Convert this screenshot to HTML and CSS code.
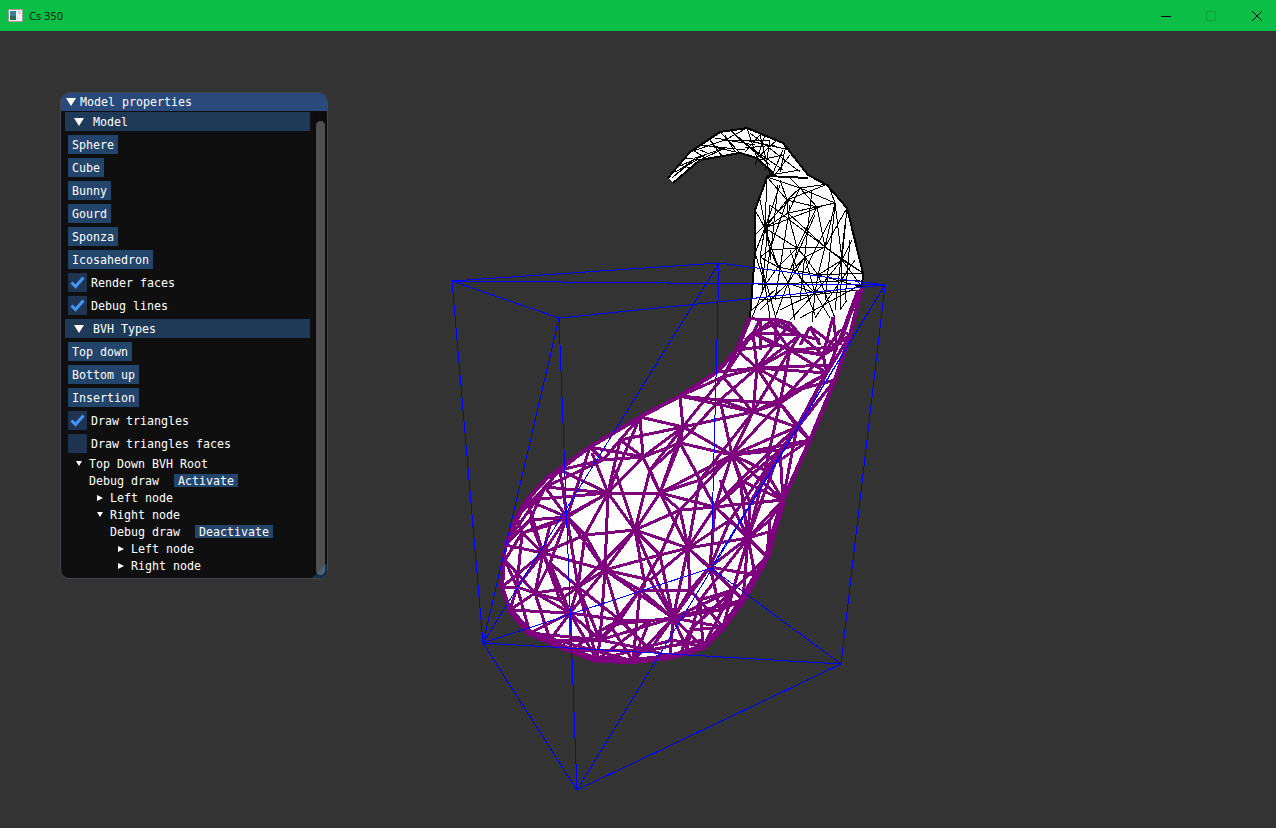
FILE: index.html
```html
<!DOCTYPE html>
<html lang="en">
<head>
    <meta charset="UTF-8">
    <title>Cs 350</title>
    <link rel="stylesheet" href="styles.css">
</head>
<body>
    <div class="title-bar">
        <svg class="app-icon" viewBox="0 0 15 13" xmlns="http://www.w3.org/2000/svg">
            <rect x="0.5" y="0.5" width="14" height="12" fill="#f4f4f4" stroke="#9a9a9a" />
            <rect x="2" y="2" width="6" height="9" fill="#3f7f96" />
            <rect x="2" y="7" width="6" height="4" fill="#2c6a55" />
            <rect x="10" y="2" width="3" height="3" fill="#c8d0d8" />
        </svg>
        <span class="app-name">Cs 350</span>
        <div class="win-controls">
            <svg class="win-btn" viewBox="0 0 10 10" xmlns="http://www.w3.org/2000/svg"><path d="M0 5.5H10" stroke="#000" /></svg>
            <svg class="win-btn" viewBox="0 0 10 10" xmlns="http://www.w3.org/2000/svg"><rect x="0.5" y="0.5" width="9" height="9" fill="none" stroke="#0a9c3b" /></svg>
            <svg class="win-btn" viewBox="0 0 10 10" xmlns="http://www.w3.org/2000/svg"><path d="M0 0L10 10M10 0L0 10" stroke="#000" /></svg>
        </div>
    </div>

    <div class="viewport">
        <svg class="scene" viewBox="0 31 1276 797" xmlns="http://www.w3.org/2000/svg">
            <!-- gourd silhouette -->
            <polygon fill="#fff" points="668,178 690,152 720,132 747,128 783,143 808,175 827,185 847,208 863,273 862,287 850,335 835,380 810,440 783,500 767,557 743,600 723,627 703,647 670,657 633,661 597,660 570,650 530,633 510,610 502,587 505,545 517,517 527,500 547,478 590,447 640,417 680,396 717,372 737,350 750,318 755,253 755,210 767,177 773,173 757,158 740,153 700,160 673,183" />

            <!-- black wire, top of the mesh -->
            <g fill="none" stroke="#000">
                <path stroke-width="2" d="M668,178L690,152L720,132L747,128L783,143L808,175L827,185L847,208L863,273L862,287M673,183L700,160L740,153L757,158L773,173L767,177L755,210L755,253L750,318M767,176L808,178" />
                <path d="M787,200L767,177M787,200L800,188M787,200L765,228M787,200L788,213M787,200L770,250M787,200L817,207M787,200L828,184M787,200L780,180
                    M800,188L767,177M800,188L828,184M800,188L817,207M800,188L788,213M800,188L835,203M800,188L790,178
                    M765,228L755,210M765,228L767,177M765,228L788,213M765,228L770,250M765,228L760,257M765,228L755,253M765,228L778,267M765,228L797,248
                    M825,247L817,207M825,247L835,203M825,247L847,208M825,247L805,257M825,247L818,275M825,247L842,260M825,247L797,248M825,247L788,213M825,247L863,273
                    M797,248L788,213M797,248L817,207M797,248L770,250M797,248L805,257M797,248L793,270M797,248L778,267
                    M805,257L793,270M805,257L818,275M805,257L815,293M805,257L788,283
                    M842,260L847,208M842,260L835,203M842,260L863,273M842,260L862,287M842,260L818,275M842,260L840,310
                    M770,250L760,257M770,250L778,267M770,250L765,285M770,250L788,283
                    M793,270L778,267M793,270L788,283M793,270L815,293M793,270L818,275
                    M765,285L760,257M765,285L755,253M765,285L752,318M765,285L770,318M765,285L778,267M765,285L788,283
                    M815,293L818,275M815,293L788,283M815,293L862,287M815,293L790,320M815,293L830,318M815,293L842,260M815,293L780,310M815,293L812,322
                    M788,283L775,318M788,283L795,320M788,283L760,310M818,275L862,287M818,275L863,273M818,275L835,318
                    M835,203L828,184M835,203L817,207M817,207L788,213M760,257L778,267M852,240L842,260M847,300L840,310
                    M770,205L762,290M778,185L770,260M790,205L775,300M812,190L800,300M835,205L825,300M845,225L835,310M850,240L845,300
                    M760,260L775,315M790,250L815,315M815,215L790,270M830,220L805,270M770,205L825,247M765,228L825,205
                    M758,285L860,280M760,300L860,290M780,185L765,228M755,235L790,200M760,200L770,250M855,260L815,318M860,285L800,318M752,310L775,290
                    M680,172L695,158M695,158L725,148M725,148L700,160M690,152L725,140M725,140L747,128M720,132L740,153M730,130L765,160
                    M747,128L757,158M745,140L790,150M760,135L770,175M777,140L757,158M783,150L773,173M790,155L775,175M800,170L770,175
                    M710,140L722,156M693,150L705,158M680,165L690,168M725,140L770,140M705,145L740,153M682,165L712,152M760,135L745,152
                    M740,140L783,170M750,133L800,172M765,135L755,165M770,140L765,170M785,150L780,172M735,135L770,165M700,145L745,150M715,138L755,145M725,135L735,152
                    M700,150L712,155M685,158L700,160M672,178L690,162M675,172L697,160M775,145L745,148M783,155L760,160" />
            </g>

            <!-- purple wire, selected triangles -->
            <g fill="none" stroke="#7f007f" stroke-width="3">
                <path stroke-width="4" d="M750,318L737,350L717,372L680,396L640,417L590,447L547,478L527,500L517,517L505,545L502,587L510,610" />
                <path stroke-width="6" d="M510,610L530,633L570,650L597,660L633,661L670,657L703,647L723,627L743,600L767,557L783,500" />
                <path stroke-width="4" d="M783,500L810,440L835,380L850,335L862,287" />
                <path d="M608,493L592,453M608,493L545,487M608,493L567,517M608,493L605,570M608,493L635,530M608,493L660,493M608,493L643,457M608,493L640,417M608,493L527,500M608,493L560,470M608,493L585,535
                    M635,530L660,493M635,530L688,548M635,530L605,570M635,530L673,618M635,530L645,585M635,530L660,555M635,530L585,535M635,530L615,470M635,530L680,510M635,530L578,587
                    M567,517L545,487M567,517L527,500M567,517L522,533M567,517L543,553M567,517L605,570M567,517L590,447M567,517L578,587M567,517L550,563
                    M543,553L522,533M543,553L517,587M543,553L505,545M543,553L535,593M543,553L570,613M543,553L605,570M543,553L502,587M543,553L560,600
                    M605,570L578,587M605,570L570,613M605,570L640,590M605,570L620,620M605,570L673,618M605,570L600,640
                    M517,587L502,587M517,587L510,610M517,587L530,633M517,587L535,593M517,587L522,533
                    M570,613L535,593M570,613L530,633M570,613L570,650M570,613L597,660M570,613L578,587M570,613L620,620
                    M535,593L510,610M535,593L550,640M535,593L578,587M535,593L505,560
                    M673,618L633,661M673,618L670,657M673,618L650,650M673,618L703,647M673,618L723,627M673,618L733,590M673,618L710,567M673,618L688,548M673,618L640,590M673,618L610,625M673,618L600,640M673,618L690,590M673,618L743,600
                    M688,548L660,493M688,548L710,567M688,548L715,507M688,548L660,555M688,548L733,590M688,548L748,538M688,548L650,580
                    M748,538L715,507M748,538L750,503M748,538L783,500M748,538L767,557M748,538L743,600M748,538L733,590M748,538L710,567M748,538L720,480M748,538L770,520
                    M710,567L733,590M710,567L715,507M710,567L690,590M710,567L743,600
                    M660,493L643,457M660,493L680,443M660,493L715,507M660,493L683,427M660,493L732,455
                    M715,507L732,455M715,507L750,503M715,507L680,443M715,507L780,450
                    M750,503L732,455M750,503L783,500M750,503L780,450M750,503L797,427
                    M732,455L683,427M732,455L753,412M732,455L780,403M732,455L797,427M732,455L780,450M732,455L810,440M732,455L680,443M732,455L700,480
                    M753,412L683,427M753,412L723,377M753,412L757,368M753,412L780,403M753,412L797,427M753,412L680,396M753,412L790,350
                    M683,427L643,457M683,427L680,396M683,427L640,417M683,427L723,377M683,427L680,443M683,427L620,440
                    M780,403L757,368M780,403L790,350M780,403L823,355M780,403L827,373M780,403L797,427M780,403L810,440M780,403L720,400
                    M757,368L753,333M757,368L723,377M757,368L790,350M757,368L800,335M757,368L717,372M757,368L737,350M757,368L827,373M757,368L830,365
                    M790,350L753,333M790,350L800,335M790,350L823,355M790,350L837,347M790,350L770,322
                    M823,355L800,335M823,355L837,347M823,355L827,373M823,355L850,335
                    M753,333L745,340M753,333L760,320M753,333L780,322M753,333L800,335M753,333L737,350
                    M800,335L780,322M800,335L820,340M723,377L680,396M723,377L737,350M723,377L753,333
                    M680,443L643,457M643,457L590,447M643,457L640,417M643,457L603,460M603,460L590,447M603,460L545,487M603,460L560,470
                    M750,318L760,320L775,319L790,323L800,335M833,317L823,355M833,317L837,347M810,327L800,345M810,327L820,345
                    M835,350L862,287M840,345L855,300M827,373L858,290M827,373L850,335M797,427L827,373M797,427L835,380M797,427L810,440M783,500L797,427
                    M530,633L633,661M550,640L600,640L650,650L670,657M570,650L650,650M597,660L673,640M703,647L733,590M723,627L733,590M743,600L733,590
                    M530,633L600,640M510,610L570,613M505,545L527,500M505,545L545,487M517,517L545,487M517,517L522,533M505,560L522,533M505,560L517,587
                    M620,620L640,590M620,620L600,640M620,620L650,650M640,590L645,585M578,587L620,620M578,587L597,660M640,590L600,640
                    M715,507L783,500M732,455L783,500M780,450L810,440M780,450L783,500M780,450L748,538M780,450L835,380M797,427L750,503
                    M748,538L775,530M770,520L783,500M770,520L767,557M767,557L733,590M755,575L710,567M755,575L748,538M755,575L723,627
                    M720,610L733,590M720,610L673,618M720,610L743,600M720,610L710,567M700,600L748,538M700,600L703,647M700,600L733,590M690,630L723,627M690,630L733,590M690,590L723,627
                    M730,520L715,507M730,520L748,538M730,520L710,567M730,520L688,548M730,520L767,557M730,520L780,450
                    M740,480L715,507M740,480L783,500M740,480L732,455M740,480L797,427M740,480L748,538M765,470L783,500M765,470L732,455M765,470L810,440M765,470L748,538M765,470L780,403
                    M660,493L700,480M700,480L715,507M700,480L688,548M700,480L680,443M700,480L753,412M680,510L715,507M680,510L660,555M680,510L688,548M680,510L660,493M680,510L732,455
                    M650,470L660,493M650,470L680,443M650,470L635,530M650,470L683,427M620,440L640,417M620,440L603,460M620,440L608,493M620,440L643,457
                    M660,555L640,590M660,555L673,618M660,555L605,570M650,580L673,618M650,580L605,570M690,590L640,590M690,590L688,548
                    M640,590L633,661M610,625L633,661M610,625L570,650M650,620L620,620M650,620L633,661M650,620L597,660
                    M790,350L827,373M757,368L797,390M797,390L827,373M797,390L753,412M797,390L780,403M797,390L835,380M720,400L753,412M720,400L680,443M720,400L680,396M720,400L732,455M720,400L757,368
                    M830,365L837,347M830,365L797,427M770,322L737,350M770,322L800,335M770,322L745,340M760,320L760,350M775,345L775,320M775,345L737,350M775,345L753,333M775,345L823,355M840,330L823,355M840,330L850,335M810,327L837,347M790,323L757,368
                    M560,470L545,487M560,470L567,517M560,470L590,447M527,500L543,553M530,520L505,545M530,520L567,517M530,520L545,487M530,520L543,553M550,525L608,493M550,525L567,517M550,525L543,553M550,525L522,533
                    M585,535L543,553M585,535L567,517M585,535L605,570M585,535L578,587M560,600L578,587M560,600L570,613M560,600L535,593M550,563L578,587M550,563L535,593M550,563L570,613
                    M550,640L570,613M550,640L570,650M578,587L600,640M600,640L597,660M600,640L570,613
                    M673,640L703,647M673,618L690,655M690,630L680,655M700,600L685,655M650,650L703,640" />
            </g>

            <!-- blue wire, BVH volume -->
            <path fill="none" stroke="#00f" d="M452,281L719,263L885,285L452,281L559,318L885,285M452,281L483,643L841,664L577,790L483,643L559,318L577,790
                M719,263L483,643M719,263L711,568L483,643M711,568L841,664M711,568L885,285M577,790L885,285M841,664L885,285" />
        </svg>

        <div class="panel">
            <div class="panel-title"><span class="arrow-big"></span>Model properties</div>
            <div class="panel-body">
                <div class="content">
                    <div class="section"><span class="arrow-big"></span>Model</div>
                    <button class="btn">Sphere</button>
                    <button class="btn">Cube</button>
                    <button class="btn">Bunny</button>
                    <button class="btn">Gourd</button>
                    <button class="btn">Sponza</button>
                    <button class="btn">Icosahedron</button>
                    <div class="check-row">
                        <span class="check"><svg viewBox="0 0 19 19" xmlns="http://www.w3.org/2000/svg"><path d="M3.5 9.5L7.5 13.5L15.5 4.5" /></svg></span>Render faces
                    </div>
                    <div class="check-row">
                        <span class="check"><svg viewBox="0 0 19 19" xmlns="http://www.w3.org/2000/svg"><path d="M3.5 9.5L7.5 13.5L15.5 4.5" /></svg></span>Debug lines
                    </div>
                    <div class="section"><span class="arrow-big"></span>BVH Types</div>
                    <button class="btn">Top down</button>
                    <button class="btn">Bottom up</button>
                    <button class="btn">Insertion</button>
                    <div class="check-row">
                        <span class="check"><svg viewBox="0 0 19 19" xmlns="http://www.w3.org/2000/svg"><path d="M3.5 9.5L7.5 13.5L15.5 4.5" /></svg></span>Draw triangles
                    </div>
                    <div class="check-row">
                        <span class="check"></span>Draw triangles faces
                    </div>

                    <div class="tree">
                        <div class="node"><span class="arrow-down"></span>Top Down BVH Root</div>
                        <div class="children">
                            <div class="leaf">Debug draw<button class="btn btn-small">Activate</button></div>
                            <div class="node"><span class="arrow-right"></span>Left node</div>
                            <div class="node"><span class="arrow-down"></span>Right node</div>
                            <div class="children">
                                <div class="leaf">Debug draw<button class="btn btn-small">Deactivate</button></div>
                                <div class="node"><span class="arrow-right"></span>Left node</div>
                                <div class="node"><span class="arrow-right"></span>Right node</div>
                            </div>
                        </div>
                    </div>
                </div>
                <div class="scrollbar"><div class="grab"></div></div>
            </div>
            <div class="grip"></div>
        </div>
    </div>
</body>
</html>
```

FILE: styles.css
```css
html, body {
    height: 100%;
}

body {
    margin: 0;
    overflow: hidden;
    display: flex;
    flex-direction: column;
    background-color: #333333;
}

/* Window title bar */
.title-bar {
    height: 31px;
    flex: none;
    display: flex;
    align-items: center;
    padding-left: 8px;
    background-color: #0bbf46;
    font-family: "Noto Sans", sans-serif;
    font-size: 11px;
    color: #06281a;
}

.app-icon {
    width: 15px;
    height: 13px;
    margin-right: 6px;
}

.win-controls {
    margin-left: auto;
    display: flex;
    gap: 35px;
    padding-right: 14px;
}

.win-btn {
    width: 10px;
    height: 10px;
    shape-rendering: crispEdges;
}

.win-btn:last-child {
    margin-left: 1px;
}

/* 3D viewport */
.viewport {
    position: relative;
    flex: 1;
}

.scene {
    position: absolute;
    top: 0;
    left: 0;
    width: 1276px;
    height: 797px;
    shape-rendering: crispEdges;
}

/* Floating debug window */
.panel {
    position: absolute;
    left: 60px;
    top: 61px;
    width: 268px;
    height: 487px;
    box-sizing: border-box;
    display: flex;
    flex-direction: column;
    overflow: hidden;
    background-color: #0f0f0f;
    border: 1px solid #44454d;
    border-radius: 9px;
    font-family: "DejaVu Sans Mono", monospace;
    font-size: 11.63px;
    color: #fff;
}

.panel-title {
    height: 18px;
    flex: none;
    display: flex;
    align-items: center;
    padding-left: 5px;
    background-color: #294a7a;
}

.panel-title .arrow-big {
    margin-right: 4px;
}

.panel-body {
    flex: 1;
    display: flex;
    min-height: 0;
}

.content {
    width: 252px;
    box-sizing: border-box;
    padding: 1px 3px 0 4px;
    display: flex;
    flex-direction: column;
    align-items: flex-start;
    gap: 4px;
}

.section {
    width: 100%;
    height: 19px;
    flex: none;
    display: flex;
    align-items: center;
    padding-left: 9px;
    box-sizing: border-box;
    background-color: #1f3a59;
}

.section .arrow-big {
    margin-right: 9px;
}

.btn {
    height: 19px;
    flex: none;
    margin: 0 0 0 3px;
    padding: 0 4px;
    border: none;
    background-color: #23446b;
    color: #fff;
    font: inherit;
}

.check-row {
    height: 19px;
    flex: none;
    display: flex;
    align-items: center;
    margin-left: 3px;
}

.check {
    width: 19px;
    height: 19px;
    margin-right: 4px;
    background-color: #1f3450;
}

.check svg {
    display: block;
    width: 19px;
    height: 19px;
}

.check path {
    fill: none;
    stroke: #4296fa;
    stroke-width: 3;
}

/* Tree nodes */
.tree {
    margin-left: 3px;
    display: flex;
    flex-direction: column;
    gap: 4px;
}

.node, .leaf {
    height: 13px;
    display: flex;
    align-items: center;
}

.children {
    padding-left: 21px;
    display: flex;
    flex-direction: column;
    gap: 4px;
}

.btn-small {
    height: 13px;
    margin-left: 15px;
}

/* Triangles */
.arrow-big {
    width: 0;
    height: 0;
    border-left: 5px solid transparent;
    border-right: 5px solid transparent;
    border-top: 8px solid #fff;
}

.arrow-down {
    width: 0;
    height: 0;
    margin: 0 7px 0 8px;
    border-left: 3px solid transparent;
    border-right: 3px solid transparent;
    border-top: 5px solid #fff;
}

.arrow-right {
    width: 0;
    height: 0;
    margin: 0 7px 0 8px;
    border-top: 3px solid transparent;
    border-bottom: 3px solid transparent;
    border-left: 6px solid #fff;
}

/* Scrollbar and resize grip */
.scrollbar {
    width: 14px;
    box-sizing: border-box;
    padding: 10px 2px 3px 3px;
    background-color: #0c0c0c;
}

.grab {
    height: 100%;
    border-radius: 5px;
    background-color: #4f4f4f;
}

.grip {
    position: absolute;
    right: 0;
    bottom: 0;
    width: 15px;
    height: 15px;
    background-color: rgba(66, 150, 250, 0.25);
    clip-path: polygon(100% 0, 100% 100%, 0 100%);
}
```
